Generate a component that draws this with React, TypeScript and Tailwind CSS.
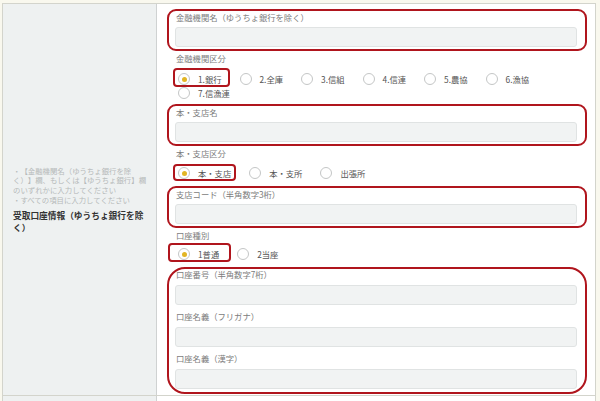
import React from "react";

const font = { fontFamily: '"Noto Sans CJK JP", "Noto Sans", sans-serif' };

type RadioProps = { label: string; checked?: boolean; mark?: string };

function Radio({ label, checked, mark }: RadioProps) {
  return (
    <span className="relative flex items-center h-[14px] mr-[18px]">
      <span className="w-3 h-3 shrink-0 rounded-full border border-[#c4c6c6] bg-white flex items-center justify-center">
        {checked && <span className="w-[5px] h-[5px] rounded-full bg-[#e2b524]" />}
      </span>
      <span className="ml-2 text-[8.3px] leading-[14px] text-[#555] whitespace-nowrap">{label}</span>
      {mark && <span className={`pointer-events-none absolute border-2 border-[#b0151d] rounded-[4px] ${mark}`} />}
    </span>
  );
}

function Field({ label, first }: { label: string; first?: boolean }) {
  return (
    <div className={first ? "" : "mt-[6px]"}>
      <div className="pl-[1px] text-[8.3px] leading-[11px] text-[#7c7c7c] whitespace-nowrap">{label}</div>
      <div className="mt-[5px] h-[20px] rounded-[3px] border border-[#e0e3e3] bg-[#f1f3f3]" />
    </div>
  );
}

function FieldBox({ label }: { label: string }) {
  return (
    <div className="border-2 border-[#b0151d] rounded-[9px] pt-[1px] pb-[2px] pl-[6px] pr-[8px]">
      <div className="pl-[1px] text-[8.3px] leading-[11px] text-[#7c7c7c] whitespace-nowrap">{label}</div>
      <div className="mt-[4px] h-[20px] rounded-[3px] border border-[#e0e3e3] bg-[#f1f3f3]" />
    </div>
  );
}

function GroupLabel({ children }: { children: React.ReactNode }) {
  return <div className="pl-[9px] text-[8.3px] leading-[14px] text-[#7c7c7c]">{children}</div>;
}

export default function App() {
  return (
    <div className="w-[600px] h-[401px] overflow-hidden bg-[#f9f8ee] pl-[2px] pt-[3px] [text-spacing-trim:space-all]" style={font}>
      <div className="w-[594px] border-l border-t border-r border-[#d3d4cc]">
        <div className="flex border-b border-[#d3d4cc]">
          <div className="w-[154px] shrink-0 bg-[#eef1f1] border-r border-[#cfd2d2] flex items-center pl-[10px] pr-[7px]">
            <div>
              <p className="text-[7.4px] leading-[9.7px] text-[#b6baba]">
                ・【金融機関名（ゆうちょ銀行を除く）】欄、もしくは【ゆうちょ銀行】欄のいずれかに入力してください
              </p>
              <p className="text-[7.4px] leading-[9.7px] text-[#b6baba]">・すべての項目に入力してください</p>
              <p className="mt-[6px] text-[8.7px] leading-[11.5px] font-bold text-[#333]">
                受取口座情報（ゆうちょ銀行を除く）
              </p>
            </div>
          </div>

          <div className="flex-1 bg-white pt-[5px] pb-[1px] pl-[10px] pr-[8px]">
            <FieldBox label="金融機関名（ゆうちょ銀行を除く）" />

            <GroupLabel>金融機関区分</GroupLabel>
            <div className="mt-[7px] ml-[11px] flex flex-wrap">
              <Radio label="1.銀行" checked mark="-left-[5px] -right-[8px] -top-[4px] -bottom-[1px]" />
              <Radio label="2.全庫" />
              <Radio label="3.信組" />
              <Radio label="4.信連" />
              <Radio label="5.農協" />
              <Radio label="6.漁協" />
              <Radio label="7.信漁連" />
            </div>

            <div className="mt-[4px]">
              <FieldBox label="本・支店名" />
            </div>

            <GroupLabel>本・支店区分</GroupLabel>
            <div className="mt-[6px] ml-[11px] flex flex-wrap">
              <Radio label="本・支店" checked mark="-left-[5px] -right-[5px] -top-[2px] -bottom-[1px]" />
              <Radio label="本・支所" />
              <Radio label="出張所" />
            </div>

            <div className="mt-[6px]">
              <FieldBox label="支店コード（半角数字3桁）" />
            </div>

            <GroupLabel>口座種別</GroupLabel>
            <div className="mt-[5px] ml-[11px] flex flex-wrap">
              <Radio label="1普通" checked mark="-left-[10px] -right-[12px] -top-[4px] -bottom-[1px]" />
              <Radio label="2当座" />
            </div>

            <div className="mt-[6px] border-2 border-[#b0151d] rounded-[18px] pb-[3px] pl-[6px] pr-[8px]">
              <Field label="口座番号（半角数字7桁）" first />
              <Field label="口座名義（フリガナ）" />
              <Field label="口座名義（漢字）" />
            </div>
          </div>
        </div>

        <div className="flex h-[12px]">
          <div className="w-[154px] shrink-0 bg-[#eef1f1] border-r border-[#cfd2d2]" />
          <div className="flex-1 bg-white" />
        </div>
      </div>
    </div>
  );
}
